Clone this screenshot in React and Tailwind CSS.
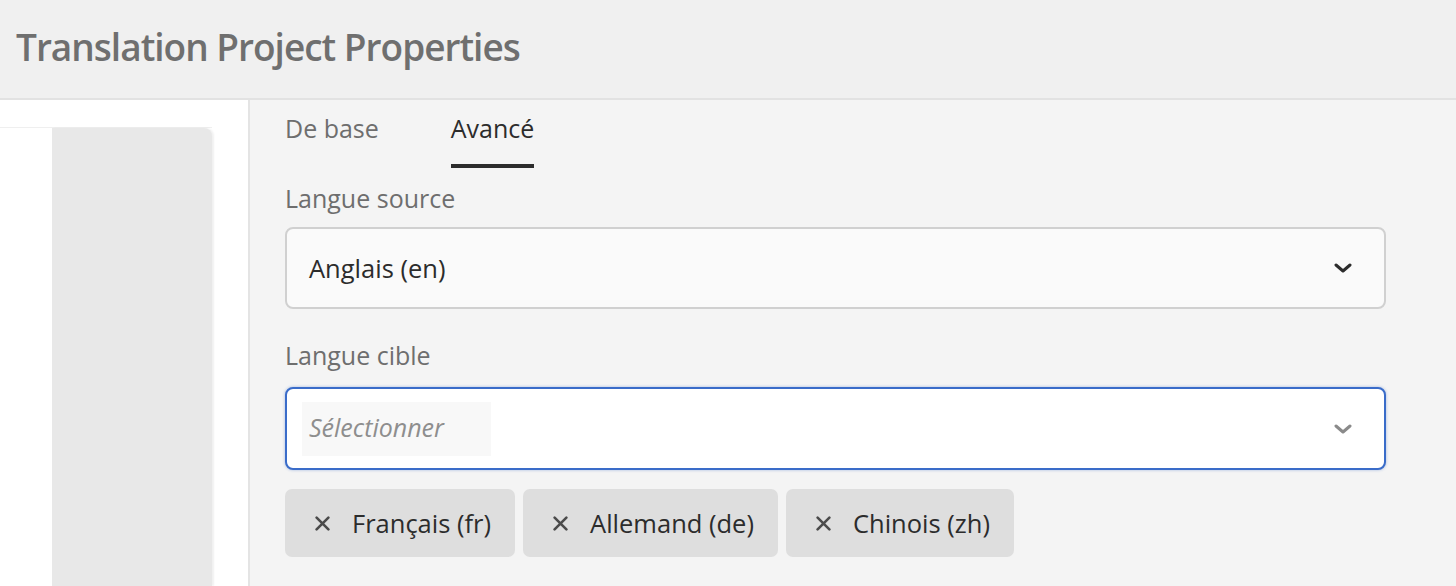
import React from 'react';

const Chevron = ({ className }) => (
  <svg viewBox="0 0 18 10" className={className} fill="none" stroke="currentColor" strokeWidth="3" strokeLinecap="round" strokeLinejoin="round">
    <path d="M2 2l7 6 7-6" />
  </svg>
);

const Cross = () => (
  <svg viewBox="0 0 14 14" className="h-[15px] w-[15px] shrink-0 text-[#4b4b4b]" fill="none" stroke="currentColor" strokeWidth="2.4" strokeLinecap="round">
    <path d="M1.5 1.5l11 11M12.5 1.5l-11 11" />
  </svg>
);

const Tag = ({ label }) => (
  <div className="flex h-[68px] items-center gap-[22px] rounded-[7px] bg-[#dedede] pl-[30px] pr-[24px]">
    <Cross />
    <span className="text-[25.5px] text-[#2c2c2c]">{label}</span>
  </div>
);

export default function App() {
  const tags = ['Français (fr)', 'Allemand (de)', 'Chinois (zh)'];

  return (
    <div className="flex h-[586px] flex-col overflow-hidden font-['Open_Sans',sans-serif]">
      {/* Header */}
      <div className="flex h-[100px] shrink-0 items-center border-b-2 border-[#e2e2e2] bg-[#f0f0f0] pb-[4px] pl-[16px]">
        <h1 className="text-[37px] font-semibold tracking-[-1px] text-[#6f6f6f]">Translation Project Properties</h1>
      </div>

      <div className="flex min-h-0 flex-1">
        {/* Left rail */}
        <div className="w-[250px] shrink-0 border-r-2 border-[#e4e4e4] bg-white pt-[27px]">
          <div className="flex h-full w-[212px] border-t border-[#efefef]">
            <div className="w-[52px] bg-white" />
            <div className="flex-1 rounded-tr-[8px] bg-[#e8e8e8] shadow-[2px_0_2px_rgba(0,0,0,0.06)]" />
          </div>
        </div>

        {/* Right panel */}
        <div className="flex-1 bg-[#f4f4f4] pl-[35px] pr-[70px]">
          <div className="flex h-[68px] gap-[72px]">
            <div className="flex flex-col pt-[12px]">
              <span className="text-[25px] leading-8 text-[#6e6e6e]">De base</span>
            </div>
            <div className="flex flex-col pt-[12px]">
              <span className="text-[25px] leading-8 text-[#2c2c2c]">Avancé</span>
              <div className="mt-auto h-[4px] bg-[#2c2c2c]" />
            </div>
          </div>

          <div className="mt-[14px] text-[25px] leading-8 text-[#6e6e6e]">Langue source</div>
          <div className="mt-[13px] flex h-[82px] items-center justify-between rounded-[8px] border-2 border-[#d0d0d0] bg-[#fafafa] pl-[22px] pr-[32px]">
            <span className="text-[25.5px] text-[#2c2c2c]">Anglais (en)</span>
            <Chevron className="h-[10px] w-[18px] text-[#2c2c2c]" />
          </div>

          <div className="mt-[30px] text-[25px] leading-8 text-[#6e6e6e]">Langue cible</div>
          <div className="mt-[16px] flex h-[83px] items-center justify-between rounded-[8px] border-2 border-[#3a6cc9] bg-white pl-[15px] pr-[32px] shadow-[0_0_3px_rgba(58,108,201,0.45)]">
            <div className="flex h-[54px] w-[189px] items-center bg-[#f8f8f8] px-[7px] pb-[2px]">
              <span className="text-[25px] italic text-[#8e8e8e]">Sélectionner</span>
            </div>
            <Chevron className="h-[10px] w-[18px] text-[#8a8a8a]" />
          </div>

          <div className="mt-[19px] flex gap-[8px]">
            {tags.map((t) => (
              <Tag key={t} label={t} />
            ))}
          </div>
        </div>
      </div>
    </div>
  );
}
